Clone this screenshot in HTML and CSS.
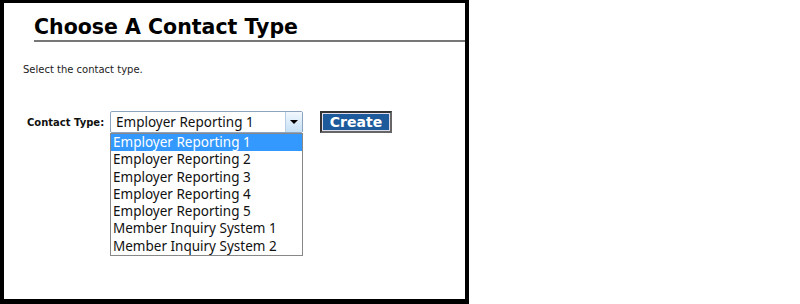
FILE: index.html
```html
<!DOCTYPE html>
<html lang="en">
<head>
    <meta charset="UTF-8">
    <title>Choose A Contact Type</title>
    <link rel="stylesheet" href="styles.css">
</head>
<body>
    <div class="frame">
        <h1 class="title">Choose A Contact Type</h1>
        <p class="intro">Select the contact type.</p>

        <div class="form-row">
            <label class="field-label">Contact Type:</label>
            <div class="combo">
                <div class="combo-value">
                    <span>Employer Reporting 1</span>
                    <span class="combo-arrow"></span>
                </div>
                <ul class="combo-list">
                    <li class="selected">Employer Reporting 1</li>
                    <li>Employer Reporting 2</li>
                    <li>Employer Reporting 3</li>
                    <li>Employer Reporting 4</li>
                    <li>Employer Reporting 5</li>
                    <li>Member Inquiry System 1</li>
                    <li>Member Inquiry System 2</li>
                </ul>
            </div>
            <button class="btn-create">Create</button>
        </div>
    </div>
</body>
</html>
```

FILE: styles.css
```css
body {
    margin: 0;
    background: white;
    font-family: "DejaVu Sans", Verdana, sans-serif;
}

.frame {
    width: 469px;
    height: 304px;
    box-sizing: border-box;
    border: 4px solid black;
    border-top-width: 3px;
    border-bottom-width: 5px;
    padding: 12px 0 0 19px;
}

.title {
    margin: 0 0 0 11px;
    padding: 0 0 1px 0;
    font-size: 20.5px;
    line-height: 24px;
    font-weight: bold;
    color: black;
    border-bottom: 2px solid #777;
}

.intro {
    margin: 22px 0 0 0;
    font-size: 10px;
    color: #222;
}

.form-row {
    display: flex;
    align-items: center;
    margin-top: 36px;
}

.field-label {
    font-size: 10px;
    font-weight: bold;
    color: #111;
    margin: 0 5px 0 4px;
    width: 78px;
}

.combo {
    position: relative;
    width: 193px;
    font-family: "Noto Sans", sans-serif;
}

.combo-value {
    height: 22px;
    box-sizing: border-box;
    border: 1px solid #8ea3bd;
    border-radius: 2px;
    display: flex;
    align-items: center;
    justify-content: space-between;
    padding-left: 5px;
    font-size: 13.5px;
    color: #111;
}

.combo-arrow {
    width: 17px;
    height: 20px;
    box-sizing: border-box;
    border-left: 1px solid #b7cde3;
    background: linear-gradient(#f2f8fd, #c4e0f5);
    position: relative;
}

.combo-arrow::after {
    content: "";
    position: absolute;
    left: 4px;
    top: 8px;
    border-left: 4px solid transparent;
    border-right: 4px solid transparent;
    border-top: 4px solid black;
}

.combo-list {
    position: absolute;
    top: 22px;
    left: 0;
    width: 193px;
    box-sizing: border-box;
    margin: 0;
    padding: 0;
    list-style: none;
    border: 1px solid #888;
    background: white;
    font-size: 13.5px;
    color: #111;
}

.combo-list li {
    height: 17.3px;
    line-height: 17px;
    padding-left: 2px;
}

.combo-list li.selected {
    background: #3399ff;
    color: white;
}

.btn-create {
    margin-left: 17px;
    width: 72px;
    height: 22px;
    box-sizing: border-box;
    border: 2px solid #333;
    border-right-color: #666;
    border-bottom-color: #666;
    background: #1d5a9c;
    color: white;
    font-family: "DejaVu Sans", Verdana, sans-serif;
    font-size: 14px;
    font-weight: bold;
    padding: 0;
    box-shadow: inset 0 0 0 1px #dde;
}
```
